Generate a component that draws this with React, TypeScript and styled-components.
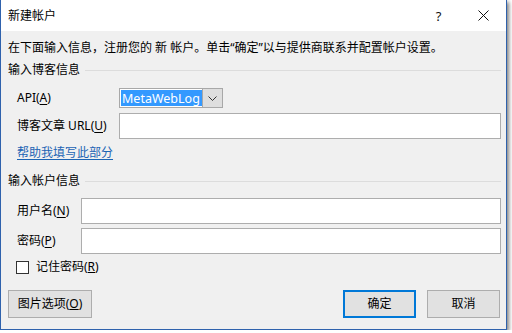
import React, { FC } from "react";
import styled, { createGlobalStyle } from "styled-components";

const GlobalStyle = createGlobalStyle`
  html, body {
    margin: 0;
    padding: 0;
    background: #ffffff;
  }
  body {
    font-family: "Noto Sans", "Noto Sans CJK SC", sans-serif;
    font-size: 12px;
    color: #000;
  }
  * {
    box-sizing: border-box;
  }
`;

const App: FC = () => {
  return (
    <>
      <GlobalStyle />
      <Window>
        <TitleBar>
          <Title>新建帐户</Title>
          <CaptionButton>?</CaptionButton>
          <CaptionButton>
            <svg width="11" height="11" viewBox="0 0 11 11">
              <path d="M0.5 0.5 L10.5 10.5 M10.5 0.5 L0.5 10.5" stroke="#111" strokeWidth="1" fill="none" />
            </svg>
          </CaptionButton>
        </TitleBar>
        <Body>
          <Info>在下面输入信息，注册您的 新 帐户。单击“确定”以与提供商联系并配置帐户设置。</Info>

          <GroupHeader $top={6}>
            <span>输入博客信息</span>
            <GroupLine />
          </GroupHeader>
          <Row $top={10} $height={20}>
            <Label $width={111}>
              API(<u>A</u>)
            </Label>
            <Select>
              <SelectValue>MetaWebLog</SelectValue>
              <SelectArrow>
                <svg width="9" height="5" viewBox="0 0 9 5">
                  <path d="M0.5 0.5 L4.5 4.5 L8.5 0.5" stroke="#333" strokeWidth="1" fill="none" />
                </svg>
              </SelectArrow>
            </Select>
          </Row>
          <Row $top={5} $height={26}>
            <Label $width={111}>
              博客文章 URL(<u>U</u>)
            </Label>
            <TextBox />
          </Row>
          <HelpLink>帮助我填写此部分</HelpLink>

          <GroupHeader $top={12}>
            <span>输入帐户信息</span>
            <GroupLine />
          </GroupHeader>
          <Row $top={9} $height={26}>
            <Label $width={73}>
              用户名(<u>N</u>)
            </Label>
            <TextBox />
          </Row>
          <Row $top={4} $height={26}>
            <Label $width={73}>
              密码(<u>P</u>)
            </Label>
            <TextBox />
          </Row>
          <CheckRow>
            <CheckBox />
            <span>
              记住密码(<u>R</u>)
            </span>
          </CheckRow>

          <ButtonBar>
            <Button $width={84}>
              图片选项(<u>O</u>)
            </Button>
            <Spacer />
            <Button $width={73} $primary>
              确定
            </Button>
            <Button $width={73}>取消</Button>
          </ButtonBar>
        </Body>
      </Window>
    </>
  );
};

export default App;

const Window = styled.div`
  width: 507px;
  height: 330px;
  display: flex;
  flex-direction: column;
  border: 1px solid #2f62ad;
  border-top: none;
  background: #f0f0f0;
  box-shadow: 2px 2px 4px rgba(0, 0, 0, 0.5);
`;

const TitleBar = styled.div`
  height: 31px;
  display: flex;
  align-items: center;
  padding-left: 7px;
  background: #ffffff;
`;

const Title = styled.span`
  flex: 1;
  font-size: 12px;
  line-height: 16px;
`;

const CaptionButton = styled.div`
  width: 45px;
  height: 31px;
  display: flex;
  align-items: center;
  justify-content: center;
  font-size: 13px;
  color: #111;
`;

const Body = styled.div`
  flex: 1;
  display: flex;
  flex-direction: column;
  padding: 9px 5px 0 7px;
`;

const Info = styled.div`
  line-height: 16px;
  white-space: nowrap;
`;

const GroupHeader = styled.div<{ $top: number }>`
  margin-top: ${(p) => p.$top}px;
  height: 16px;
  line-height: 16px;
  display: flex;
  align-items: center;
`;

const GroupLine = styled.div`
  flex: 1;
  height: 1px;
  margin-left: 5px;
  background: #dcdcdc;
`;

const Row = styled.div<{ $top: number; $height: number }>`
  margin-top: ${(p) => p.$top}px;
  height: ${(p) => p.$height}px;
  display: flex;
  align-items: center;
`;

const Label = styled.div<{ $width: number }>`
  width: ${(p) => p.$width}px;
  flex-shrink: 0;
  padding-left: 9px;
  line-height: 16px;
  white-space: nowrap;

  u {
    text-decoration-thickness: 1px;
    text-underline-offset: 2px;
  }
`;

const Select = styled.div`
  width: 104px;
  height: 20px;
  display: flex;
  padding: 1px;
  border: 1px solid #a8a8a8;
  background: #ffffff;
`;

const SelectValue = styled.div`
  flex: 1;
  display: flex;
  align-items: center;
  padding-left: 1px;
  background: #3399ff;
  color: #ffffff;
  font-size: 12.5px;
  white-space: nowrap;
  overflow: hidden;
`;

const SelectArrow = styled.div`
  width: 20px;
  flex-shrink: 0;
  display: flex;
  align-items: center;
  justify-content: center;
  margin: -1px -1px -1px 0;
  border-left: 1px solid #a8a8a8;
  background: #dedede;
`;

const TextBox = styled.div`
  flex: 1;
  height: 100%;
  border: 1px solid #adadad;
  background: #ffffff;
`;

const HelpLink = styled.a`
  margin-top: 6px;
  padding-left: 9px;
  line-height: 16px;
  color: #1c64b4;
  text-decoration: underline;
  text-underline-offset: 2px;
  cursor: pointer;
`;

const CheckRow = styled.div`
  margin-top: 5px;
  height: 16px;
  display: flex;
  align-items: center;
  padding-left: 8px;
  gap: 7px;
  line-height: 16px;
`;

const CheckBox = styled.div`
  width: 13px;
  height: 13px;
  border: 1px solid #333333;
  background: #ffffff;
`;

const ButtonBar = styled.div`
  margin-top: 15px;
  display: flex;
  gap: 11px;
  padding-right: 1px;
`;

const Spacer = styled.div`
  flex: 1;
`;

const Button = styled.div<{ $width: number; $primary?: boolean }>`
  width: ${(p) => p.$width}px;
  height: 28px;
  display: flex;
  align-items: center;
  justify-content: center;
  background: #e1e1e1;
  border: ${(p) => (p.$primary ? "2px solid #0078d7" : "1px solid #adadad")};
  line-height: 16px;
`;
